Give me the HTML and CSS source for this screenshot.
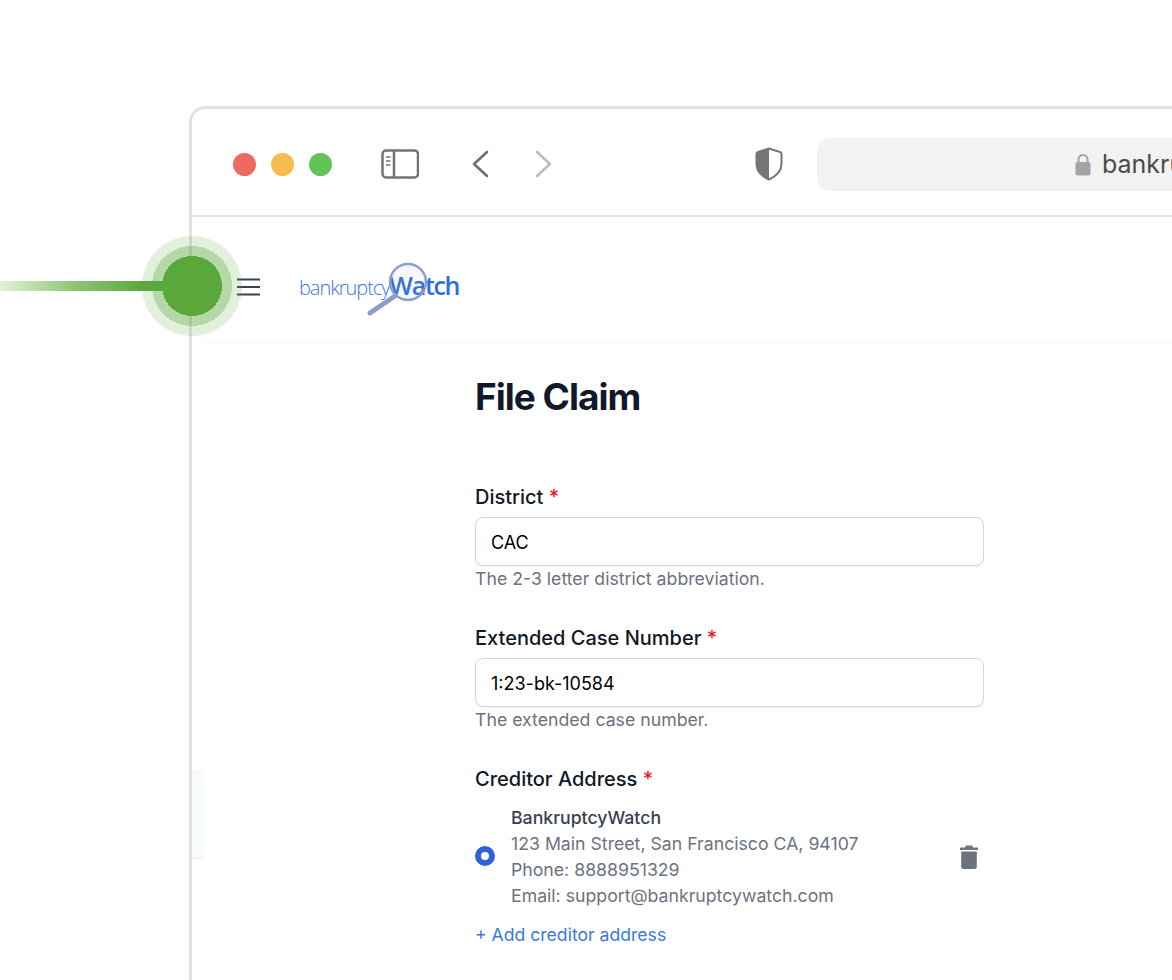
FILE: index.html
```html
<!DOCTYPE html>
<html lang="en">
<head>
<meta charset="utf-8">
<title>File Claim</title>
<link rel="stylesheet" href="styles.css">
</head>
<body>
<div class="window">
  <header class="toolbar">
    <div class="lights">
      <span class="light red"></span>
      <span class="light yellow"></span>
      <span class="light green"></span>
    </div>
    <svg class="sidebar-icon" width="38" height="30" viewBox="0 0 38 30" fill="none" stroke="#757575" stroke-width="2.500">
      <rect x="1.500" y="1.500" width="35.500" height="27" rx="3.500"/>
      <path d="M13 1.500v27"/>
      <path d="M5 8h4.500M5 12h4.500M5 16h4.500" stroke-width="1.600"/>
    </svg>
    <svg class="back" width="18" height="28" viewBox="0 0 18 28" fill="none" stroke="#707070" stroke-width="2.600" stroke-linecap="round" stroke-linejoin="round">
      <path d="M16 2 3 14l13 12"/>
    </svg>
    <svg class="forward" width="18" height="28" viewBox="0 0 18 28" fill="none" stroke="#bdbdbd" stroke-width="2.600" stroke-linecap="round" stroke-linejoin="round">
      <path d="M2 2l13 12L2 26"/>
    </svg>
    <svg class="shield" width="28" height="34" viewBox="0 0 28 34">
      <path d="M14 1.500 3 5a2 2 0 0 0-1.500 2v10c0 7 6 12.500 12.500 15.500 6.500-3 12.500-8.500 12.500-15.500V7A2 2 0 0 0 25 5Z" fill="#fff" stroke="#757575" stroke-width="2"/>
      <path d="M14 1.500 3 5a2 2 0 0 0-1.500 2v10c0 7 6 12.500 12.500 15.500Z" fill="#757575"/>
    </svg>
    <div class="urlbar">
      <svg class="lock" width="16" height="23" viewBox="0 0 16 23">
        <path d="M3.500 10V6.500a4.500 4.500 0 0 1 9 0V10" fill="none" stroke="#a3a3a3" stroke-width="2"/>
        <rect x="0.500" y="9" width="15" height="13.500" rx="2" fill="#a3a3a3"/>
      </svg>
      <span class="url">bankruptcywatch.com</span>
    </div>
  </header>

  <div class="app">
    <aside class="rail">
      <div class="rail-item"></div>
    </aside>
    <div class="app-main">
      <div class="app-header">
        <svg class="menu" width="23" height="18" viewBox="0 0 23 18" stroke="#374151" stroke-width="2">
          <path d="M0 1.500h23M0 9h23M0 16.500h23"/>
        </svg>
        <div class="logo">
          <span class="logo-light">bankruptcy</span><span class="logo-bold">Watch</span>
          <svg class="loupe" width="66" height="66" viewBox="0 0 66 66" fill="none">
            <circle cx="41" cy="22" r="18" fill="#8d9fc8" fill-opacity="0.08" stroke="#8d9fc8" stroke-width="2.500"/>
            <path d="M28 36 3 53" stroke="#8d9fc8" stroke-width="5" stroke-linecap="round"/>
          </svg>
        </div>
      </div>
      <main class="content">
        <h1 class="title">File Claim</h1>

        <div class="field">
          <div class="label">District <span class="req">*</span></div>
          <div class="input">CAC</div>
          <div class="hint">The 2-3 letter district abbreviation.</div>
        </div>

        <div class="field">
          <div class="label">Extended Case Number <span class="req">*</span></div>
          <div class="input">1:23-bk-10584</div>
          <div class="hint">The extended case number.</div>
        </div>

        <div class="field">
          <div class="label">Creditor Address <span class="req">*</span></div>
          <div class="address">
            <span class="radio"></span>
            <div class="address-text">
              <div class="address-name">BankruptcyWatch</div>
              <div>123 Main Street, San Francisco CA, 94107</div>
              <div>Phone: 8888951329</div>
              <div>Email: support@bankruptcywatch.com</div>
            </div>
            <svg class="trash" width="18" height="24" viewBox="0 0 18 24" fill="#6b7280">
              <path d="M6 0.500h6l1 2h4.500a.5.500 0 0 1 .5.500v2H0V3a.5.500 0 0 1 .5-.500H5Z"/>
              <path d="M1.200 6.500h15.600V21.500a2.500 2.500 0 0 1-2.500 2.500H3.700a2.500 2.500 0 0 1-2.500-2.500Z"/>
            </svg>
          </div>
          <a class="add-link" href="#">+ Add creditor address</a>
        </div>
      </main>
    </div>
  </div>
</div>

<div class="marker">
  <span class="marker-line"></span>
  <span class="marker-dot"></span>
</div>
</body>
</html>
```

FILE: styles.css
```css
* { box-sizing: border-box; }

html, body {
  margin: 0;
  height: 100%;
}

body {
  position: relative;
  height: 980px;
  overflow: hidden;
  background: #fff;
  font-family: Inter, "Liberation Sans", sans-serif;
}

.window {
  margin: 106px 0 0 189px;
  height: 874px;
  background: #fff;
  border-top: 3px solid #e2e2e2;
  border-left: 3px solid #e2e2e2;
  border-top-left-radius: 16px;
  overflow: hidden;
}

.toolbar {
  display: flex;
  align-items: center;
  height: 108px;
  padding: 4px 0 0 41px;
  border-bottom: 2px solid #e5e5e5;
  white-space: nowrap;
}

.lights { display: flex; gap: 15px; }

.light {
  width: 23px;
  height: 23px;
  border-radius: 50%;
}
.red { background: #ee6a5f; }
.yellow { background: #f5bd4f; }
.green { background: #61c454; }

.sidebar-icon { margin-left: 49px; flex: none; }
.back { margin-left: 52px; flex: none; }
.forward { margin-left: 46px; flex: none; }
.shield { margin-left: 202px; flex: none; }

.urlbar {
  display: flex;
  align-items: center;
  flex: none;
  width: 700px;
  height: 53px;
  margin-left: 34px;
  padding-left: 258px;
  background: #f2f2f2;
  border-radius: 13px;
}

.url {
  margin-left: 11px;
  font-size: 25px;
  color: #4a4a4a;
}

.app { display: flex; height: 764px; }

.rail {
  flex: none;
  width: 12px;
  padding-top: 554px;
}

.rail-item {
  height: 88px;
  background: #f8fbfd;
  border-top: 1px solid #f1f3f5;
  border-bottom: 1px solid #eceef0;
}

.app-main { flex: 1; min-width: 0; }

.app-header {
  display: flex;
  align-items: center;
  height: 126px;
  padding: 14px 0 0 33px;
  border-bottom: 1px solid #f3f4f6;
}

.logo {
  position: relative;
  margin-left: 39px;
  font-family: "Open Sans", sans-serif;
  font-size: 20px;
  line-height: 30px;
  color: #3b78d8;
  white-space: nowrap;
}

.logo-light { font-weight: 300; letter-spacing: -1.050px; }
.logo-bold { font-weight: 600; font-size: 25px; letter-spacing: -1.300px; color: #2f6fdb; }

.loupe {
  position: absolute;
  left: 68px;
  top: -10px;
}

.content {
  width: 509px;
  margin-left: 271px;
  padding-top: 34px;
  color: #111827;
}

.title {
  margin: 0 0 34px;
  font-size: 37px;
  line-height: 40px;
  font-weight: 700;
  letter-spacing: -1px;
}

.field { padding-top: 32px; }

.label {
  font-size: 20px;
  line-height: 28px;
  font-weight: 500;
  margin-bottom: 6px;
}

.req { color: #dc2626; }

.input {
  display: flex;
  align-items: center;
  height: 49px;
  padding: 1px 15px 0;
  font-size: 18px;
  color: #000;
  background: #fff;
  border: 1px solid #d1d5db;
  border-radius: 8px;
  box-shadow: 0 1px 2px rgba(0, 0, 0, 0.05);
}

.hint {
  font-size: 17.700px;
  line-height: 26px;
  color: #6b7280;
}

.address {
  display: flex;
  align-items: center;
  margin-top: 12px;
  padding-right: 6px;
}

.radio {
  flex: none;
  width: 20px;
  height: 20px;
  margin-bottom: 2px;
  border-radius: 50%;
  background: #fff;
  border: 6px solid #2f62d9;
}

.address-text {
  flex: 1;
  margin-left: 16px;
  font-size: 17.700px;
  line-height: 26px;
  color: #6b7280;
}

.address-name { font-weight: 500; color: #374151; }

.trash { flex: none; }

.add-link {
  display: block;
  margin-top: 13px;
  font-size: 17.600px;
  line-height: 26px;
  color: #3b78dd;
  text-decoration: none;
}

.marker {
  position: absolute;
  left: 0;
  top: 236px;
  width: 242px;
  height: 100px;
}

.marker-line {
  position: absolute;
  left: 0;
  top: 45px;
  width: 170px;
  height: 10px;
  background: linear-gradient(90deg, #e3f3d6 0%, #8cc472 45%, #5aa83c 85%);
}

.marker-dot {
  position: absolute;
  left: 142px;
  top: 0;
  width: 100px;
  height: 100px;
  border-radius: 50%;
  background: radial-gradient(circle closest-side, #5aa83c 0 60%, rgba(90, 168, 60, 0.45) 60% 80%, rgba(90, 168, 60, 0.18) 80% 100%);
}
```
